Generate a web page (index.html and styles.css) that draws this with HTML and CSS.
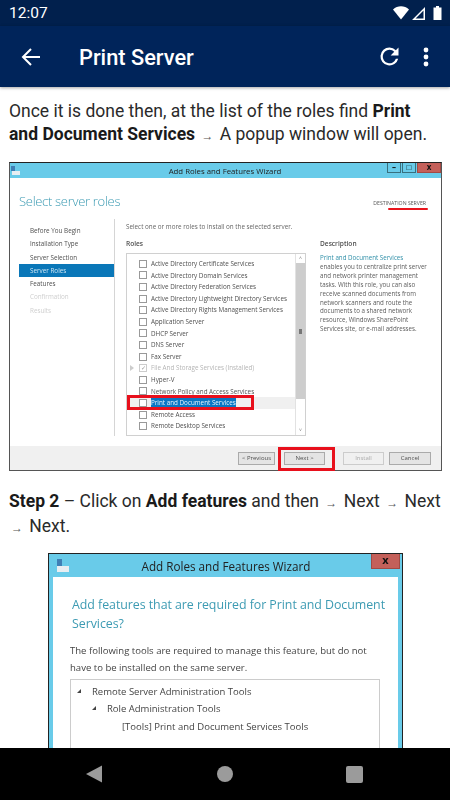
FILE: index.html
```html
<!DOCTYPE html>
<html lang="en">
<head>
    <meta charset="UTF-8">
    <meta name="viewport" content="width=device-width, initial-scale=1.0">
    <title>Print Server</title>
    <link rel="stylesheet" href="styles.css">
</head>
<body>
<div class="phone">
    <!-- Status bar -->
    <div class="statusbar">
        <span class="clock">12:07</span>
        <div class="status-icons">
            <svg width="16" height="14" viewBox="0 0 16 14"><path d="M0 3.5C4.5 -0.8 11.5 -0.8 16 3.5L8 13.5Z" fill="#fff"/></svg>
            <svg class="cell" width="13" height="13" viewBox="0 0 13 13"><path d="M13 0V13H0Z M11.5 3.6V11.5H3.6Z" fill="#fff" fill-rule="evenodd"/></svg>
            <svg class="batt" width="9" height="14" viewBox="0 0 9 14"><path d="M3 0H6V1.5H8.5V14H0.5V1.5H3Z" fill="#fff"/></svg>
        </div>
    </div>

    <!-- App bar -->
    <header class="appbar">
        <button class="icon-btn back">
            <svg width="20" height="20" viewBox="0 0 20 20"><path d="M19 10H2.5M10 2L2 10L10 18" fill="none" stroke="#fff" stroke-width="2"/></svg>
        </button>
        <h1>Print Server</h1>
        <button class="icon-btn refresh">
            <svg width="27" height="27" viewBox="0 0 24 24"><path d="M17.65 6.35A7.96 7.96 0 0 0 12 4a8 8 0 1 0 7.73 10h-2.08A6 6 0 1 1 12 6c1.66 0 3.14.69 4.22 1.78L13 11h7V4z" fill="#fff"/></svg>
        </button>
        <button class="icon-btn more">
            <svg width="6" height="20" viewBox="0 0 6 20"><circle cx="3" cy="3" r="2.4" fill="#fff"/><circle cx="3" cy="10" r="2.4" fill="#fff"/><circle cx="3" cy="17" r="2.4" fill="#fff"/></svg>
        </button>
    </header>

    <!-- Article -->
    <main class="content">
        <p class="para">Once it is done then, at the list of the roles find <b>Print</b> <b>and Document Services</b> <span class="arrow">→</span> A popup window will open.</p>

        <div class="wizard roles-shot">
            <div class="titlebar">
                <svg class="app-icon" width="9" height="10" viewBox="0 0 9 10"><rect x="0" y="0" width="4" height="5" fill="#3f7fb5"/><rect x="1" y="5" width="8" height="4" fill="#e8eef2"/></svg>
                <span class="title-text">Add Roles and Features Wizard</span>
                <div class="win-btns">
                    <span class="win-btn">&#8211;</span>
                    <span class="win-btn">&#9633;</span>
                    <span class="win-btn close">x</span>
                </div>
            </div>
            <div class="wiz-head">
                <h2>Select server roles</h2>
                <span class="dest">DESTINATION SERVER<i class="red-line"></i></span>
            </div>
            <div class="wiz-body">
                <ul class="steps">
                    <li>Before You Begin</li>
                    <li>Installation Type</li>
                    <li>Server Selection</li>
                    <li class="active">Server Roles</li>
                    <li>Features</li>
                    <li class="off">Confirmation</li>
                    <li class="off">Results</li>
                </ul>
                <div class="wiz-main">
                    <p class="intro">Select one or more roles to install on the selected server.</p>
                    <div class="columns">
                        <div class="roles-col">
                            <div class="col-title">Roles</div>
                            <div class="role-box">
                                <ul class="roles">
                                    <li><i class="check"></i>Active Directory Certificate Services</li>
                                    <li><i class="check"></i>Active Directory Domain Services</li>
                                    <li><i class="check"></i>Active Directory Federation Services</li>
                                    <li><i class="check"></i>Active Directory Lightweight Directory Services</li>
                                    <li><i class="check"></i>Active Directory Rights Management Services</li>
                                    <li><i class="check"></i>Application Server</li>
                                    <li><i class="check"></i>DHCP Server</li>
                                    <li><i class="check"></i>DNS Server</li>
                                    <li><i class="check"></i>Fax Server</li>
                                    <li class="grey"><i class="tree-tri"></i><i class="check ticked">&#10003;</i>File And Storage Services (Installed)</li>
                                    <li><i class="check"></i>Hyper-V</li>
                                    <li><i class="check"></i>Network Policy and Access Services</li>
                                    <li class="picked"><i class="check"></i><span class="sel">Print and Document Services</span><i class="red-box"></i></li>
                                    <li><i class="check"></i>Remote Access</li>
                                    <li><i class="check"></i>Remote Desktop Services</li>
                                </ul>
                                <div class="scroll">
                                    <span class="scroll-btn">&#708;</span>
                                    <div class="scroll-thumb"><i></i></div>
                                    <span class="scroll-btn bottom">&#709;</span>
                                </div>
                            </div>
                        </div>
                        <div class="desc-col">
                            <div class="col-title">Description</div>
                            <p class="desc"><span class="link">Print and Document Services</span><br>enables you to centralize print server<br>and network printer management<br>tasks. With this role, you can also<br>receive scanned documents from<br>network scanners and route the<br>documents to a shared network<br>resource, Windows SharePoint<br>Services site, or e-mail addresses.</p>
                        </div>
                    </div>
                </div>
            </div>
            <div class="wiz-foot">
                <span class="btn prev">&lt; Previous</span>
                <span class="btn next">Next &gt;<i class="red-box"></i></span>
                <span class="btn disabled">Install</span>
                <span class="btn cancel">Cancel</span>
            </div>
        </div>

        <p class="para step"><b>Step 2</b> &#8211; Click on <b>Add features</b> and then <span class="arrow">→</span> Next <span class="arrow">→</span> Next <span class="arrow">→</span> Next.</p>

        <div class="wizard features-shot">
            <div class="titlebar">
                <svg class="app-icon" width="14" height="14" viewBox="0 0 14 14"><rect x="1" y="0" width="5" height="7" fill="#3f7fb5"/><rect x="1" y="7" width="12" height="6" fill="#e8eef2"/></svg>
                <span class="title-text">Add Roles and Features Wizard</span>
                <span class="win-btn close">x</span>
            </div>
            <div class="dialog">
                <h3>Add features that are required for Print and Document Services?</h3>
                <p class="note">The following tools are required to manage this feature, but do not have to be installed on the same server.</p>
                <div class="tree">
                    <div class="node"><i class="tree-mark"></i>Remote Server Administration Tools</div>
                    <div class="node lvl2"><i class="tree-mark"></i>Role Administration Tools</div>
                    <div class="node lvl3">[Tools] Print and Document Services Tools</div>
                </div>
            </div>
        </div>
    </main>

    <!-- Android nav -->
    <nav class="navbar">
        <svg width="17" height="18" viewBox="0 0 17 18"><path d="M0 9L16 0.5V17.5Z" fill="#9b9b9b"/></svg>
        <svg width="16" height="16" viewBox="0 0 16 16"><circle cx="8" cy="8" r="8" fill="#9b9b9b"/></svg>
        <svg width="17" height="17" viewBox="0 0 17 17"><rect width="17" height="17" rx="2" fill="#9b9b9b"/></svg>
    </nav>
</div>
</body>
</html>
```

FILE: styles.css
```css
body {
    margin: 0;
    font-family: Roboto, Arial, sans-serif;
    background: #fff;
}
ul, p, h1, h2, h3 {
    margin: 0;
    padding: 0;
    font-weight: normal;
}
ul {
    list-style: none;
}
i {
    font-style: normal;
}
.phone {
    width: 450px;
    height: 800px;
    display: flex;
    flex-direction: column;
    overflow: hidden;
}

/* Status bar + app bar */
.statusbar {
    height: 26px;
    flex: none;
    background: #01204d;
    color: #fff;
    display: flex;
    align-items: center;
    justify-content: space-between;
    padding: 0 8px 0 9px;
}
.clock {
    font-size: 15.5px;
}
.status-icons {
    display: flex;
    align-items: center;
}
.cell {
    margin-left: 3px;
}
.batt {
    margin-left: 8px;
}
.appbar {
    height: 61px;
    flex: none;
    background: #00245a;
    display: flex;
    align-items: center;
    box-shadow: 0 1px 3px rgba(0, 0, 0, 0.35);
    position: relative;
}
.appbar h1 {
    color: #fff;
    font-size: 21.8px;
    font-weight: 500;
    margin: 2px 0 0 38px;
    flex: 1;
}
.icon-btn {
    background: none;
    border: none;
    padding: 0;
    display: flex;
}
.back {
    margin-left: 21px;
}
.refresh {
    margin-right: 20px;
}
.more {
    margin-right: 21px;
}

/* Article */
.content {
    flex: 1;
    overflow: hidden;
    padding: 13px 9px 0;
}
.para {
    font-size: 17.5px;
    line-height: 23px;
    color: #2a2a2a;
}
.para b {
    font-weight: 700;
    color: #1a1a1a;
}
.arrow {
    font-family: "Liberation Sans", sans-serif;
    font-size: 12px;
    color: #555;
    padding: 0 2px;
}
.step {
    margin-top: 19px;
    margin-bottom: 13px;
}

/* Shared wizard look */
.wizard {
    font-family: "Open Sans", sans-serif;
    border: 1px solid #555;
    border-top-color: #222;
    background: #fff;
    color: #505050;
    filter: blur(0.4px);
}
.titlebar {
    background: #69cbe9;
    display: flex;
    align-items: center;
    color: #222;
}
.title-text {
    flex: 1;
    text-align: center;
}

/* First screenshot */
.roles-shot {
    width: 431px;
    height: 307px;
    margin-top: 14px;
    display: flex;
    flex-direction: column;
    font-size: 6.3px;
}
.roles-shot .titlebar {
    height: 15px;
    flex: none;
    font-size: 7.8px;
    padding-left: 1px;
}
.roles-shot .title-text {
    padding-left: 43px;
}
.win-btns {
    display: flex;
    align-self: flex-start;
    gap: 1px;
}
.win-btn {
    width: 14px;
    height: 10px;
    background: #69cbe9;
    border: 1px solid #38707f;
    border-top: none;
    color: #111;
    font-size: 8px;
    font-weight: 700;
    line-height: 8px;
    text-align: center;
    box-sizing: border-box;
}
.win-btn.close {
    width: 24px;
    background: #c4605a;
    border-color: #a34a44;
}
.wiz-head {
    height: 42px;
    flex: none;
    display: flex;
    justify-content: space-between;
    padding: 14px 15px 0 9px;
    box-sizing: border-box;
}
.wiz-head h2 {
    font-size: 13px;
    letter-spacing: -0.3px;
    color: #3d9bb3;
    font-weight: 300;
}
.dest {
    position: relative;
    font-size: 5.2px;
    color: #555;
    padding-top: 7px;
    height: 8px;
}
.red-line {
    position: absolute;
    left: 15px;
    right: -2px;
    top: 16px;
    height: 2px;
    background: #e8141c;
    border-radius: 1px;
}
.wiz-body {
    flex: 1;
    display: flex;
    min-height: 0;
}
.steps {
    width: 95px;
    margin-left: 9px;
    flex: none;
    padding-top: 4px;
}
.steps li {
    height: 13.3px;
    line-height: 13.3px;
    padding-left: 11px;
}
.steps .active {
    background: #0a77b8;
    color: #cfe6f3;
}
.steps .off {
    color: #cfcfcf;
}
.wiz-main {
    flex: 1;
    margin: -1px 0 10px 0;
    padding: 3px 0 0 11px;
    border-left: 1px solid #d5d5d5;
}
.intro {
    line-height: 9px;
    color: #666;
}
.columns {
    display: flex;
    margin-top: 8px;
}
.col-title {
    font-size: 6.6px;
    font-weight: 600;
    line-height: 9px;
    margin-bottom: 5px;
}
.roles-col {
    width: 180px;
}
.role-box {
    height: 183px;
    border: 1px solid #d0d0d0;
    box-sizing: border-box;
    display: flex;
}
.roles {
    flex: 1;
    padding-top: 4px;
}
.roles li {
    height: 11.6px;
    line-height: 11.6px;
    padding-left: 12px;
    display: flex;
    align-items: center;
    position: relative;
    white-space: nowrap;
}
.check {
    width: 6px;
    height: 6px;
    border: 1px solid #999;
    background: #fff;
    margin-right: 4px;
    flex: none;
    font-size: 6px;
    line-height: 6px;
    text-align: center;
}
.grey {
    color: #b5b5b5;
}
.ticked {
    border-color: #ccc;
    color: #999;
}
.tree-tri {
    position: absolute;
    left: 3px;
    top: 3px;
    border-left: 4px solid #ccc;
    border-top: 3px solid transparent;
    border-bottom: 3px solid transparent;
}
.picked {
    background: #f0f0f0;
}
.sel {
    background: #0a77c4;
    color: #e8f4fb;
}
.red-box {
    position: absolute;
    border: 3px solid #e8101c;
    box-sizing: border-box;
}
.picked .red-box {
    left: 0;
    top: -2px;
    width: 127px;
    height: 15px;
}
.scroll {
    width: 9px;
    flex: none;
    display: flex;
    flex-direction: column;
    border-left: 1px solid #e2e2e2;
}
.scroll-btn {
    height: 9px;
    font-size: 5px;
    line-height: 9px;
    text-align: center;
    color: #888;
}
.scroll-btn.bottom {
    margin-top: auto;
}
.scroll-thumb {
    height: 136px;
    background: #cdcdcd;
    display: flex;
    align-items: center;
    justify-content: center;
}
.scroll-thumb i {
    width: 3px;
    height: 5px;
    background: #777;
}
.desc-col {
    margin-left: 14px;
    width: 112px;
}
.desc {
    font-size: 6.2px;
    line-height: 8.9px;
    color: #5c5c5c;
    margin-top: 6px;
    white-space: nowrap;
}
.link {
    color: #2f8fa8;
}
.wiz-foot {
    height: 24px;
    flex: none;
    background: #f0f0f0;
    display: flex;
    align-items: center;
    justify-content: flex-end;
    padding-right: 10px;
}
.btn {
    height: 13px;
    box-sizing: border-box;
    border: 1px solid #aaa;
    background: #e4e4e4;
    font-size: 6px;
    line-height: 11px;
    text-align: center;
    position: relative;
}
.prev {
    width: 37px;
}
.next {
    width: 41px;
    margin-left: 9px;
}
.disabled {
    width: 41px;
    margin-left: 18px;
    background: #f0f0f0;
    color: #aaa;
    border-color: #ccc;
}
.cancel {
    width: 42px;
    margin-left: 5px;
}
.next .red-box {
    left: -7px;
    top: -6px;
    width: 57px;
    height: 24px;
}

/* Second screenshot */
.features-shot {
    width: 355px;
    margin-left: 39px;
    border: 1px solid #222;
    border-bottom: none;
    box-sizing: border-box;
    background: #69cbe9;
    padding: 0 4px;
}
.features-shot .titlebar {
    height: 23px;
    font-size: 11.7px;
    margin: 0 -4px;
    padding-left: 7px;
}
.features-shot .title-text {
    padding-left: 11px;
}
.features-shot .win-btn.close {
    width: 29px;
    height: 15px;
    align-self: flex-start;
    font-size: 11px;
    line-height: 12px;
    margin-right: 2px;
}
.dialog {
    background: #fff;
    padding: 18px 6px 0 19px;
    height: 175px;
    overflow: hidden;
}
.dialog h3 {
    font-size: 12.4px;
    letter-spacing: -0.05px;
    line-height: 19px;
    color: #3d9bb3;
}
.note {
    font-size: 9.55px;
    line-height: 17px;
    color: #444;
    margin: 9px 5px 0 -2px;
}
.tree {
    margin: 3px 12px 0 -2px;
    height: 80px;
    border: 1px solid #ccc;
    padding: 3px 10px;
    font-size: 9.5px;
    color: #444;
}
.node {
    height: 17.4px;
    line-height: 17.4px;
    padding-left: 11px;
    position: relative;
}
.tree-mark {
    position: absolute;
    left: -4px;
    top: 6px;
    border-bottom: 4px solid #444;
    border-left: 4px solid transparent;
}
.lvl2 {
    margin-left: 15px;
}
.lvl3 {
    margin-left: 30px;
}

/* Android nav */
.navbar {
    height: 52px;
    flex: none;
    background: #000;
    display: flex;
    align-items: center;
    justify-content: space-between;
    padding: 0 87px 0 86px;
}
```
